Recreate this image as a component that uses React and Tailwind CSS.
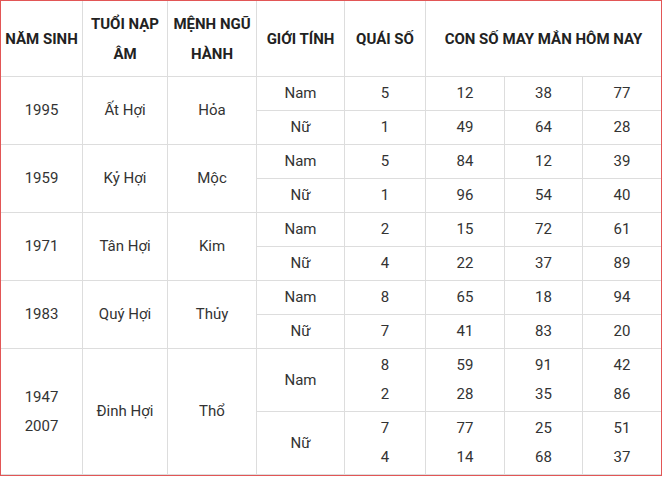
const groups = [
  { years: ['1995'], tuoi: 'Ất Hợi', menh: 'Hỏa', rows: [['Nam', ['5'], ['12'], ['38'], ['77']], ['Nữ', ['1'], ['49'], ['64'], ['28']]] },
  { years: ['1959'], tuoi: 'Kỷ Hợi', menh: 'Mộc', rows: [['Nam', ['5'], ['84'], ['12'], ['39']], ['Nữ', ['1'], ['96'], ['54'], ['40']]] },
  { years: ['1971'], tuoi: 'Tân Hợi', menh: 'Kim', rows: [['Nam', ['2'], ['15'], ['72'], ['61']], ['Nữ', ['4'], ['22'], ['37'], ['89']]] },
  { years: ['1983'], tuoi: 'Quý Hợi', menh: 'Thủy', rows: [['Nam', ['8'], ['65'], ['18'], ['94']], ['Nữ', ['7'], ['41'], ['83'], ['20']]] },
  {
    years: ['1947', '2007'],
    tuoi: 'Đinh Hợi',
    menh: 'Thổ',
    rows: [
      ['Nam', ['8', '2'], ['59', '28'], ['91', '35'], ['42', '86']],
      ['Nữ', ['7', '4'], ['77', '14'], ['25', '68'], ['51', '37']],
    ],
  },
]

const cell = 'flex flex-col items-center justify-center border-b border-[#dddddd] text-center'
const head = 'font-bold text-[15px] text-[#222222] leading-[30px]'

function Lines({ items }) {
  return items.map((t, i) => (
    <span key={i} className="leading-[29px]">
      {t}
    </span>
  ))
}

export default function App() {
  return (
    <div
      className="w-[662px] h-[476px] border border-[#e25656] bg-white text-[15px] text-[#333333]"
      style={{ fontFamily: 'Roboto, "Noto Sans", sans-serif' }}
    >
      <div className="grid grid-cols-[82px_85px_89px_88px_81px_79px_78px_78px] grid-rows-[76px_repeat(8,34px)_63px_63px]">
        {/* Header */}
        <div className={`${cell} border-r ${head}`}>NĂM SINH</div>
        <div className={`${cell} border-r ${head}`}>
          <span>TUỔI NẠP</span>
          <span>ÂM</span>
        </div>
        <div className={`${cell} border-r ${head}`}>
          <span>MỆNH NGŨ</span>
          <span>HÀNH</span>
        </div>
        <div className={`${cell} border-r ${head}`}>GIỚI TÍNH</div>
        <div className={`${cell} border-r ${head}`}>QUÁI SỐ</div>
        <div className={`${cell} col-span-3 ${head}`}>CON SỐ MAY MẮN HÔM NAY</div>

        {/* Body */}
        {groups.map((g) => [
          <div key={g.years[0] + 'y'} className={`${cell} border-r row-span-2`}>
            <Lines items={g.years} />
          </div>,
          <div key={g.years[0] + 't'} className={`${cell} border-r row-span-2`}>
            {g.tuoi}
          </div>,
          <div key={g.years[0] + 'm'} className={`${cell} border-r row-span-2`}>
            {g.menh}
          </div>,
          ...g.rows.map((r, ri) => [
            <div key={g.years[0] + ri + 'g'} className={`${cell} border-r`}>
              {r[0]}
            </div>,
            <div key={g.years[0] + ri + 'q'} className={`${cell} border-r`}>
              <Lines items={r[1]} />
            </div>,
            <div key={g.years[0] + ri + 'a'} className={`${cell} border-r`}>
              <Lines items={r[2]} />
            </div>,
            <div key={g.years[0] + ri + 'b'} className={`${cell} border-r`}>
              <Lines items={r[3]} />
            </div>,
            <div key={g.years[0] + ri + 'c'} className={cell}>
              <Lines items={r[4]} />
            </div>,
          ]),
        ])}
      </div>
    </div>
  )
}
